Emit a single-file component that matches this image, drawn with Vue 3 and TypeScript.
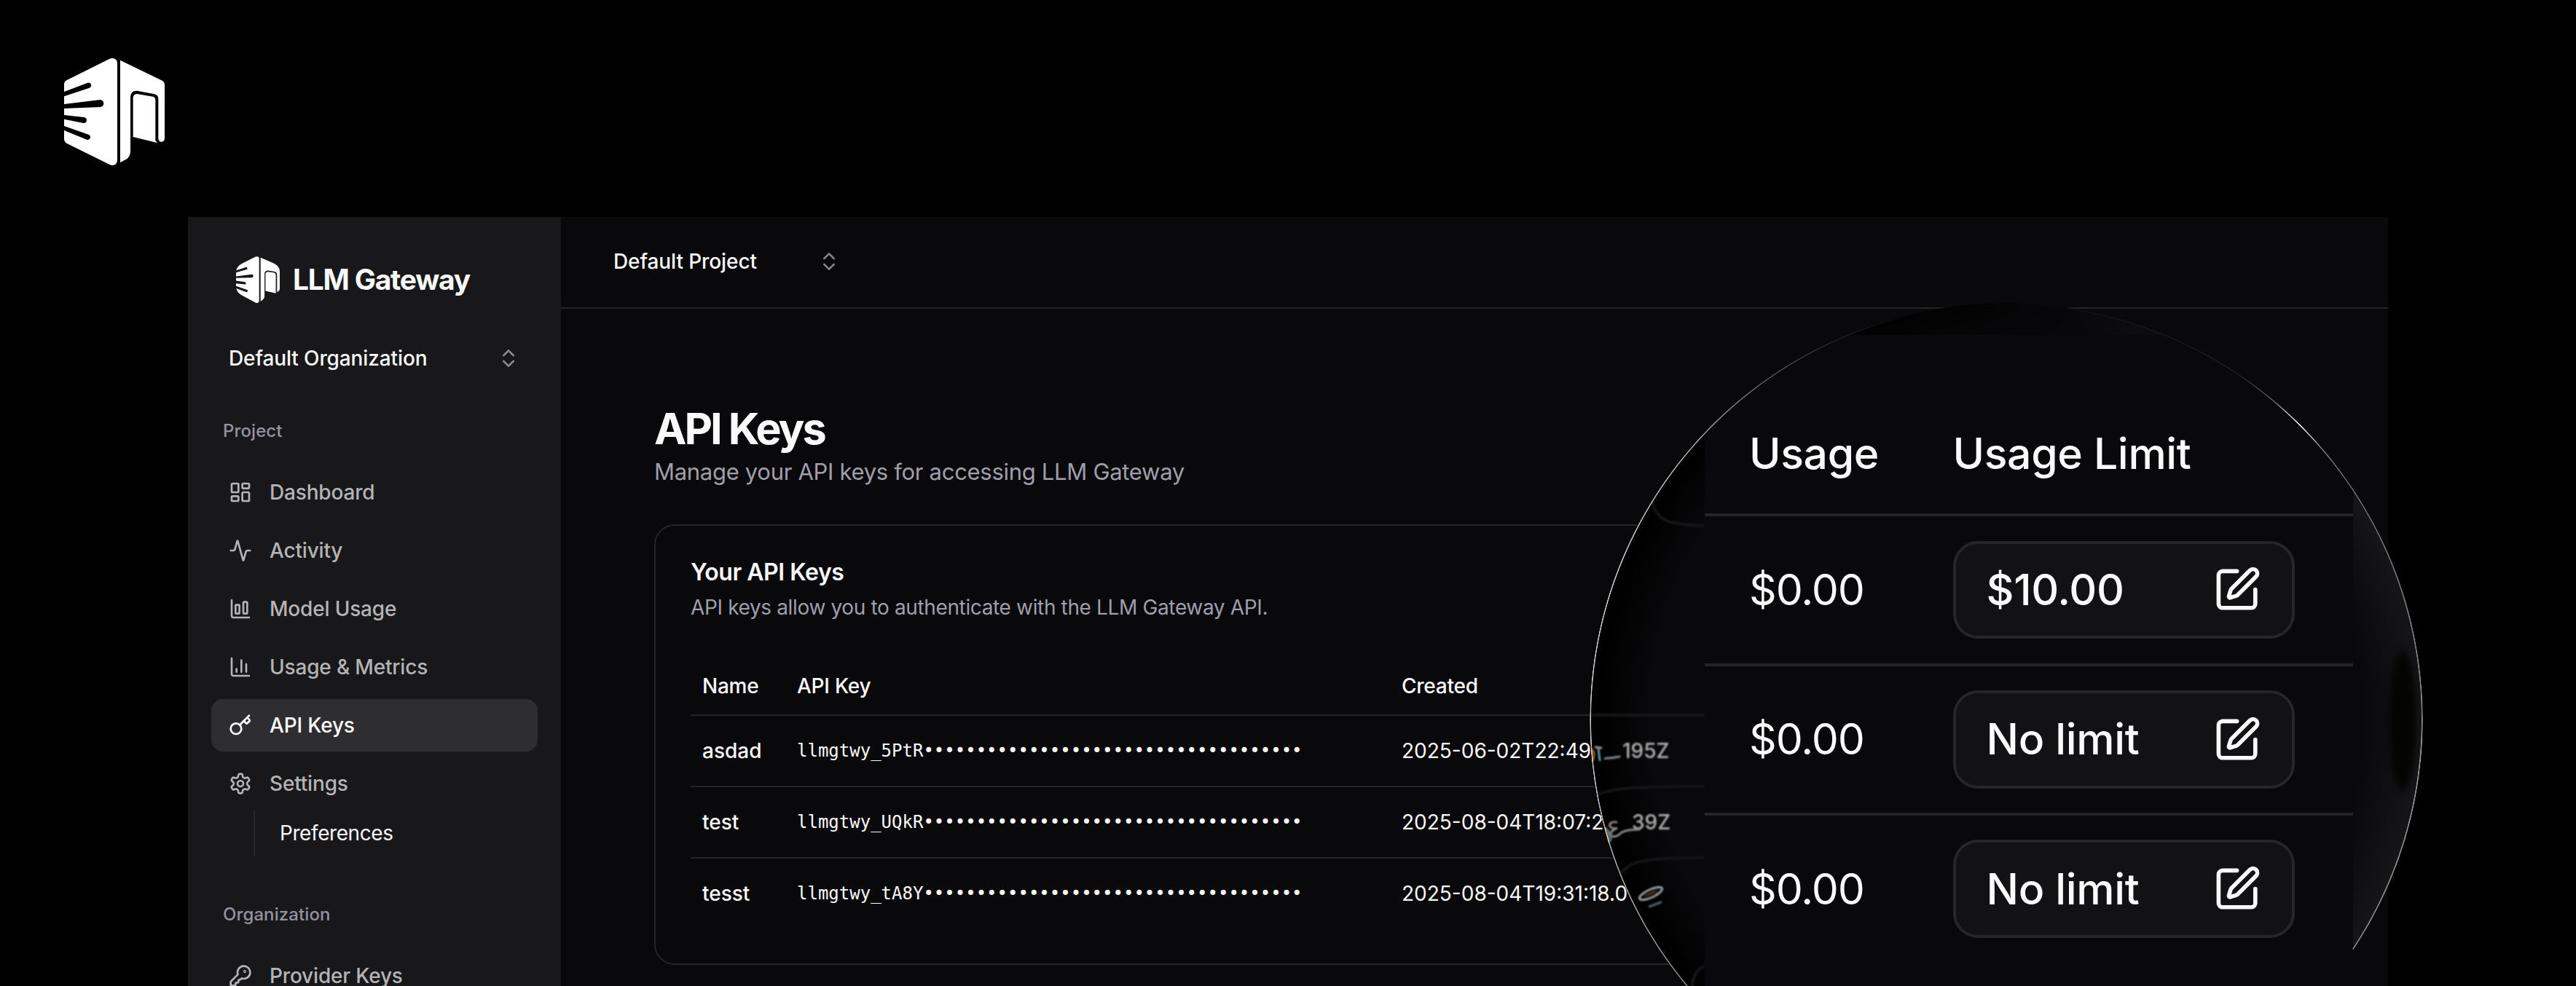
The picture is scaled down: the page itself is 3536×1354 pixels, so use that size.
<script setup lang="ts">
interface Shape {
  d?: string[]
  rects?: number[][]
  circles?: number[][]
}

interface NavItem {
  label: string
  icon: string
  active?: boolean
}

interface KeyRow {
  name: string
  key: string
  created: string
  usage: string
  limit: string
}

const icons: Record<string, Shape> = {
  dashboard: { rects: [[3, 3, 7, 9], [14, 3, 7, 5], [14, 12, 7, 9], [3, 16, 7, 5]] },
  activity: { d: ['M22 12h-2.48a2 2 0 0 0-1.93 1.46l-2.35 8.36a.25.25 0 0 1-.48 0L9.24 2.18a.25.25 0 0 0-.48 0l-2.35 8.36A2 2 0 0 1 4.49 12H2'] },
  model: { d: ['M3 3v16a2 2 0 0 0 2 2h16'], rects: [[15, 5, 4, 12], [7, 8, 4, 9]] },
  metrics: { d: ['M3 3v16a2 2 0 0 0 2 2h16', 'M18 17V9', 'M13 17V5', 'M8 17v-3'] },
  key: {
    d: ['m15.5 7.5 2.3 2.3a1 1 0 0 0 1.4 0l2.1-2.1a1 1 0 0 0 0-1.4L19 4', 'm21 2-9.6 9.6'],
    circles: [[7.5, 15.5, 5.5]],
  },
  settings: {
    d: ['M12.22 2h-.44a2 2 0 0 0-2 2v.18a2 2 0 0 1-1 1.73l-.43.25a2 2 0 0 1-2 0l-.15-.08a2 2 0 0 0-2.73.73l-.22.38a2 2 0 0 0 .73 2.73l.15.1a2 2 0 0 1 1 1.72v.51a2 2 0 0 1-1 1.74l-.15.09a2 2 0 0 0-.73 2.73l.22.38a2 2 0 0 0 2.73.73l.15-.08a2 2 0 0 1 2 0l.43.25a2 2 0 0 1 1 1.73V20a2 2 0 0 0 2 2h.44a2 2 0 0 0 2-2v-.18a2 2 0 0 1 1-1.73l.43-.25a2 2 0 0 1 2 0l.15.08a2 2 0 0 0 2.73-.73l.22-.39a2 2 0 0 0-.73-2.73l-.15-.08a2 2 0 0 1-1-1.74v-.5a2 2 0 0 1 1-1.74l.15-.09a2 2 0 0 0 .73-2.73l-.22-.38a2 2 0 0 0-2.73-.73l-.15.08a2 2 0 0 1-2 0l-.43-.25a2 2 0 0 1-1-1.73V4a2 2 0 0 0-2-2z'],
    circles: [[12, 12, 3]],
  },
  provider: {
    d: ['M2.586 17.414A2 2 0 0 0 2 18.828V21a1 1 0 0 0 1 1h3a1 1 0 0 0 1-1v-1a1 1 0 0 1 1-1h1a1 1 0 0 0 1-1v-1a1 1 0 0 1 1-1h.172a2 2 0 0 0 1.414-.586l.814-.814a6.5 6.5 0 1 0-4-4z'],
    circles: [[16.5, 7.5, 0.5]],
  },
}

const projectNav: NavItem[] = [
  { label: 'Dashboard', icon: 'dashboard' },
  { label: 'Activity', icon: 'activity' },
  { label: 'Model Usage', icon: 'model' },
  { label: 'Usage & Metrics', icon: 'metrics' },
  { label: 'API Keys', icon: 'key', active: true },
  { label: 'Settings', icon: 'settings' },
]

const organizationNav: NavItem[] = [{ label: 'Provider Keys', icon: 'provider' }]

const dots = '•'.repeat(36)

const rows: KeyRow[] = [
  { name: 'asdad', key: 'llmgtwy_5PtR', created: '2025-06-02T22:49:', usage: '$0.00', limit: '$10.00' },
  { name: 'test', key: 'llmgtwy_UQkR', created: '2025-08-04T18:07:2', usage: '$0.00', limit: 'No limit' },
  { name: 'tesst', key: 'llmgtwy_tA8Y', created: '2025-08-04T19:31:18.0', usage: '$0.00', limit: 'No limit' },
]
</script>

<template>
  <div class="stage">
    <svg class="mark" viewBox="84 60 414 441" fill="#fff">
      <path d="M84 168Q84 156 94 151L270 63Q283 57 294 63Q303 68 303 82V478Q303 492 294 498Q283 504 270 497L94 410Q84 403 84 392V357L177 395A11 11 0 0 0 186 375L84 339V311L163 327A12 12 0 0 0 166 303L84 294V267L232 261A15 15 0 0 0 232 231L84 249V217L188 182A10.5 10.5 0 0 0 181 161L84 198Z" />
      <path d="M315 68L488 152Q498 158 498 170V391A13 13 0 0 1 472 391V228Q472 212 457 208L385 194Q357 192 357 222V440Q357 466 340 476L315 489Z" />
      <path d="M368 222Q370 207 385 207L450 218Q460 221 460 232V400L469 409L368 384Z" />
    </svg>

    <div class="app">
      <aside class="sidebar">
        <div class="brand">
          <svg class="brand-mark" viewBox="219 185 178 193" preserveAspectRatio="none" fill="#fff">
            <path d="M220 243Q224 227 240 217L297 187Q313 183 313 194V370Q312 381 299 377L240 345Q224 336 220 318L260 333A5 5 0 0 0 264 324L219 308V297L254 301A5 5 0 0 0 255 291L219 286V275L283 273A6 6 0 0 0 283 260L219 268V252L261 240A5 5 0 0 0 259 230Z" />
            <path d="M319 190L372 214Q396 226 397 246V318Q397 330 386 333V262Q386 250 376 248L350 244Q335 244 335 258V350Q335 362 319 372Z" />
            <path d="M339 258Q339 250 350 249L375 253Q381 255 381 264V338L339 328Z" />
          </svg>
          <span class="brand-name">LLM Gateway</span>
        </div>

        <div class="org-select">
          <span>Default Organization</span>
          <svg class="icon chevrons" viewBox="0 0 24 24"><path d="m7 15 5 5 5-5" /><path d="m7 9 5-5 5 5" /></svg>
        </div>

        <div class="group-label">Project</div>
        <nav class="menu">
          <a v-for="item in projectNav" :key="item.label" class="item" :class="{ active: item.active }">
            <svg class="icon" viewBox="0 0 24 24">
              <path v-for="(d, i) in icons[item.icon].d" :key="'p' + i" :d="d" />
              <rect v-for="(r, i) in icons[item.icon].rects" :key="'r' + i" :x="r[0]" :y="r[1]" :width="r[2]" :height="r[3]" rx="1" />
              <circle v-for="(c, i) in icons[item.icon].circles" :key="'c' + i" :cx="c[0]" :cy="c[1]" :r="c[2]" />
            </svg>
            <span>{{ item.label }}</span>
          </a>
        </nav>
        <div class="submenu"><span>Preferences</span></div>

        <div class="group-label second">Organization</div>
        <nav class="menu">
          <a v-for="item in organizationNav" :key="item.label" class="item">
            <svg class="icon" viewBox="0 0 24 24">
              <path v-for="(d, i) in icons[item.icon].d" :key="'p' + i" :d="d" />
              <circle v-for="(c, i) in icons[item.icon].circles" :key="'c' + i" :cx="c[0]" :cy="c[1]" :r="c[2]" />
            </svg>
            <span>{{ item.label }}</span>
          </a>
        </nav>
      </aside>

      <main class="main">
        <header class="topbar">
          <span>Default Project</span>
          <svg class="icon chevrons" viewBox="0 0 24 24"><path d="m7 15 5 5 5-5" /><path d="m7 9 5-5 5 5" /></svg>
        </header>

        <section class="content">
          <h1>API Keys</h1>
          <p class="lead">Manage your API keys for accessing LLM Gateway</p>

          <div class="card">
            <h2>Your API Keys</h2>
            <p class="card-desc">API keys allow you to authenticate with the LLM Gateway API.</p>
            <div class="table">
              <div class="tr head">
                <span>Name</span><span>API Key</span><span>Created</span>
              </div>
              <div v-for="row in rows" :key="row.name" class="tr">
                <span class="name">{{ row.name }}</span>
                <span class="mono">{{ row.key }}{{ dots }}</span>
                <span>{{ row.created }}</span>
              </div>
            </div>
          </div>
        </section>
      </main>
    </div>

    <div class="lens">
      <div class="shade left"></div>
      <div class="shade right"></div>
      <div class="spot"></div>
      <svg class="refraction" viewBox="2182 416 1144 938">
        <g class="bent-lines">
          <path d="M2268 688C2272 714 2290 721 2340 721.5" />
          <path d="M2183 982H2340" />
          <path d="M2193 1091C2215 1082 2240 1080 2340 1080" />
          <path d="M2225 1199C2240 1182 2255 1178 2340 1178" />
          <path d="M2323 1358C2322 1342 2330 1330 2340 1327" />
        </g>
        <g class="bent-text">
          <text x="2227" y="1041">195Z</text>
          <text x="2240" y="1139">39Z</text>
          <path d="M2190 1026L2198 1027" stroke="#b98b62" />
          <path d="M2186 1030Q2190 1036 2186 1044" stroke="#a8682f" />
          <path d="M2194 1028L2196 1044" stroke="#5d97ae" />
          <path d="M2203 1041.5Q2213 1041 2223 1039" stroke="#7f868b" />
          <path d="M2219 1129Q2208 1128 2210 1135Q2214 1139 2220 1137Q2208 1142 2212 1148Q2218 1151 2226 1143Q2234 1139 2250 1139" stroke="#8e8a86" />
          <path d="M2204 1137Q2208 1144 2208 1157" stroke="#a66d38" />
          <path d="M2207 1140Q2212 1147 2211 1154" stroke="#44769c" />
          <ellipse cx="2266" cy="1227" rx="17" ry="5.5" transform="rotate(-25 2266 1227)" stroke="#9aa2a8" />
          <ellipse cx="2266" cy="1227" rx="10" ry="2" transform="rotate(-25 2266 1227)" fill="#4a2e1c" stroke="none" />
          <path d="M2264 1245L2280 1239" stroke="#4d6272" />
        </g>
      </svg>
    </div>

    <div class="zoomed">
      <div class="zr zhead"><span>Usage</span><span>Usage Limit</span></div>
      <div v-for="row in rows" :key="row.name" class="zr">
        <span class="amount">{{ row.usage }}</span>
        <div class="limit">
          <span>{{ row.limit }}</span>
          <svg viewBox="0 0 24 24">
            <path d="M12 3H5a2 2 0 0 0-2 2v14a2 2 0 0 0 2 2h14a2 2 0 0 0 2-2v-7" />
            <path d="M18.375 2.625a1 1 0 0 1 3 3l-9.013 9.014a2 2 0 0 1-.853.505l-2.873.84a.5.5 0 0 1-.62-.62l.84-2.873a2 2 0 0 1 .506-.852z" />
          </svg>
        </div>
      </div>
    </div>
    <div class="ring"></div>
  </div>
</template>

<style>
html,
body {
  background: #000;
}
</style>

<style scoped>
.stage {
  position: relative;
  box-sizing: border-box;
  width: 3536px;
  height: 1354px;
  overflow: hidden;
  background: #000;
  color: #fafafa;
  font-family: Inter, 'Liberation Sans', sans-serif;
  font-size: 28px;
  line-height: 40px;
}
.stage * {
  box-sizing: border-box;
}
h1,
h2,
p {
  margin: 0;
}
.mark {
  display: block;
  width: 138px;
  height: 147px;
  margin: 80px 0 71px 88px;
}
.app {
  display: flex;
  width: 3020px;
  height: 1056px;
  margin-left: 258px;
  overflow: hidden;
  background: #09090b;
}
.icon {
  flex: none;
  width: 32px;
  height: 32px;
  fill: none;
  stroke: currentColor;
  stroke-width: 2;
  stroke-linecap: round;
  stroke-linejoin: round;
}
.chevrons {
  opacity: 0.5;
}

.sidebar {
  flex: none;
  width: 512px;
  padding: 54px 32px 0;
  background: #18181a;
}
.brand {
  display: flex;
  align-items: center;
  gap: 18px;
  height: 64px;
  padding-left: 34px;
}
.brand-mark {
  width: 60px;
  height: 64px;
}
.brand-name {
  font-size: 39px;
  font-weight: 700;
  letter-spacing: -1.25px;
}
.org-select {
  display: flex;
  align-items: center;
  justify-content: space-between;
  height: 72px;
  margin-top: 40px;
  padding: 0 24px;
  font-weight: 500;
  letter-spacing: -0.12px;
}
.group-label {
  display: flex;
  align-items: center;
  height: 64px;
  margin: 32px 0 16px;
  padding-left: 16px;
  color: #94929e;
  font-size: 24px;
  font-weight: 500;
  letter-spacing: 0.1px;
}
.group-label.second {
  margin-top: 48px;
}
.menu {
  display: flex;
  flex-direction: column;
  gap: 8px;
}
.item {
  display: flex;
  align-items: center;
  gap: 24px;
  height: 72px;
  padding: 0 24px;
  border-radius: 16px;
  color: #b4b4b5;
  font-weight: 500;
  letter-spacing: -0.18px;
}
.item.active {
  background: #2e2e30;
  color: #fff;
}
.submenu {
  display: flex;
  align-items: center;
  height: 64px;
  margin-left: 58px;
  padding-left: 34px;
  border-left: 2px solid #29292b;
  letter-spacing: -0.42px;
}

.main {
  flex: 1;
}
.topbar {
  display: flex;
  align-items: center;
  justify-content: space-between;
  height: 126px;
  padding: 0 2124px 2px 72px;
  border-bottom: 2px solid #252528;
  font-weight: 500;
  letter-spacing: -0.1px;
}
.content {
  padding: 128px 128px 0;
}
h1 {
  font-size: 59.5px;
  font-weight: 700;
  line-height: 72px;
  letter-spacing: -3px;
}
.lead {
  color: #9f9fa9;
  font-size: 31px;
  line-height: 48px;
  letter-spacing: -0.3px;
}
.card {
  height: 605px;
  margin-top: 48px;
  padding: 48px;
  border: 2px solid #252528;
  border-radius: 28px;
}
h2 {
  font-size: 32px;
  font-weight: 600;
  line-height: 32px;
  letter-spacing: -0.45px;
}
.card-desc {
  margin-top: 12px;
  color: #9f9fa9;
  letter-spacing: -0.36px;
}
.table {
  margin-top: 48px;
}
.tr {
  display: grid;
  grid-template-columns: 130px 830px 1fr;
  align-items: center;
  height: 98px;
  padding: 0 16px;
  border-bottom: 2px solid #252528;
}
.tr.head {
  height: 81px;
  font-weight: 500;
  letter-spacing: -0.25px;
}
.tr:last-child {
  border-bottom: 0;
  height: 96px;
}
.tr .name {
  font-weight: 500;
}
.tr .mono {
  font-family: 'DejaVu Sans Mono', monospace;
  font-size: 24px;
}

.lens,
.ring {
  position: absolute;
  left: 2182px;
  top: 416px;
  width: 1144px;
  height: 1144px;
  border-radius: 50%;
}
.lens {
  overflow: hidden;
  background: #09090b;
}
.shade {
  position: absolute;
  inset: 0;
  border-radius: 50%;
}
.shade.left {
  background: radial-gradient(circle closest-side, transparent 86%, #000 99%);
  mask-image: linear-gradient(to right, #000 10%, rgba(0, 0, 0, 0.6) 45%, transparent 60%);
}
.shade.right {
  background: radial-gradient(circle closest-side, transparent 84%, rgba(255, 255, 255, 0.055) 100%);
  mask-image: linear-gradient(to left, #000 15%, transparent 45%);
}
.spot {
  position: absolute;
  left: 1098px;
  top: 478px;
  width: 36px;
  height: 192px;
  border-radius: 50%;
  background: #040403;
  filter: blur(5px);
}
.refraction {
  position: absolute;
  left: 0;
  top: 0;
  width: 1144px;
  height: 938px;
  fill: none;
}
.bent-lines {
  stroke: #161618;
  stroke-width: 4;
  filter: blur(1px);
}
.bent-text {
  stroke-width: 3;
  stroke-linecap: round;
  filter: blur(1.2px);
}
.bent-text text {
  fill: #b2b2b2;
  font-size: 28px;
  font-weight: 500;
}
.ring {
  background: conic-gradient(
    rgba(255, 255, 255, 0) 0deg,
    rgba(255, 255, 255, 0.03) 12deg,
    rgba(255, 255, 255, 0.06) 34deg,
    rgba(255, 255, 255, 0.3) 40deg,
    #fff 45deg,
    rgba(255, 255, 255, 0.45) 49deg,
    rgba(255, 255, 255, 0.35) 55deg,
    rgba(255, 255, 255, 0.45) 75deg,
    rgba(255, 255, 255, 0.6) 95deg,
    rgba(255, 255, 255, 0.5) 123.5deg,
    transparent 123.6deg,
    transparent 228deg,
    rgba(255, 255, 255, 0.5) 228.1deg,
    rgba(255, 255, 255, 0.8) 265deg,
    rgba(255, 255, 255, 0.8) 290deg,
    rgba(255, 255, 255, 0.65) 312deg,
    rgba(255, 255, 255, 0.3) 326deg,
    rgba(255, 255, 255, 0.12) 336deg,
    rgba(255, 255, 255, 0) 347deg
  );
  mask-image: radial-gradient(circle closest-side, transparent calc(100% - 2.4px), #000 calc(100% - 1.6px), #000 calc(100% - 0.8px), transparent 100%);
}
.zoomed {
  position: absolute;
  left: 2340px;
  top: 460px;
  width: 890px;
  height: 894px;
  background: #09090b;
  clip-path: path('M0 894V136A570.5 570.5 0 0 1 198 0H630A570.5 570.5 0 0 1 890 214V894Z');
  font-size: 58.8px;
  line-height: 84px;
  letter-spacing: -0.3px;
}
.zr {
  display: grid;
  grid-template-columns: 279.5px 469.5px;
  align-items: center;
  height: 205.6px;
  padding-left: 61px;
  border-bottom: 4px solid #252528;
}
.zr:last-child {
  height: 201px;
  border-bottom: 0;
}
.zhead {
  height: 249px;
  padding-top: 80px;
  font-weight: 500;
}
.amount {
  letter-spacing: -1px;
}
.limit {
  display: flex;
  align-items: center;
  justify-content: space-between;
  height: 134.6px;
  padding: 0 42px;
  border: 4px solid #262628;
  border-radius: 34px;
  background: #121214;
  font-weight: 500;
}
.limit svg {
  width: 67.2px;
  height: 67.2px;
  fill: none;
  stroke: currentColor;
  stroke-width: 2;
  stroke-linecap: round;
  stroke-linejoin: round;
}
</style>
